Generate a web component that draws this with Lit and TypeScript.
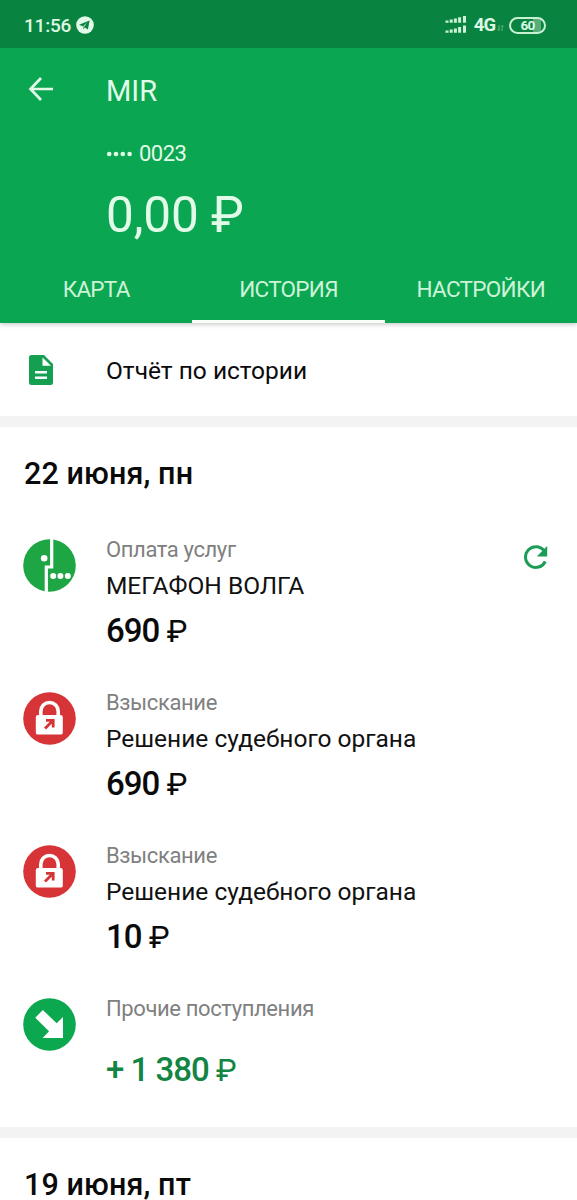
import { LitElement, css, html, svg } from "lit";
import { customElement, property } from "lit/decorators.js";
import { classMap } from "lit/directives/class-map.js";

type Kind = "megafon" | "lock" | "income";

interface Operation {
  kind: Kind;
  label: string;
  title?: string;
  amount: string;
  repeat?: boolean;
}

const operations: Operation[] = [
  {
    kind: "megafon",
    label: "Оплата услуг",
    title: "МЕГАФОН ВОЛГА",
    amount: "690",
    repeat: true,
  },
  {
    kind: "lock",
    label: "Взыскание",
    title: "Решение судебного органа",
    amount: "690",
  },
  {
    kind: "lock",
    label: "Взыскание",
    title: "Решение судебного органа",
    amount: "10",
  },
  { kind: "income", label: "Прочие поступления", amount: "+ 1 380" },
];

const icons = {
  megafon: svg`
    <circle cx="26.5" cy="26.5" r="26.3" fill="#1fa644" />
    <path d="M28.7 0V28H23.3V53" fill="none" stroke="#fff" stroke-width="3.2" />
    <circle cx="21.2" cy="19.3" r="3.3" fill="#fff" />
    <circle cx="30.2" cy="37" r="3" fill="#fff" />
    <circle cx="37.4" cy="37" r="3" fill="#fff" />
    <circle cx="44.8" cy="37" r="3" fill="#fff" />
  `,
  lock: svg`
    <circle cx="26.5" cy="26.5" r="26.3" fill="#d73438" />
    <path
      d="M17.8 25V19.2a8.7 8.7 0 0 1 17.4 0V25"
      fill="none"
      stroke="#fff"
      stroke-width="3.6"
    />
    <rect x="12.8" y="23" width="27" height="19.6" rx="2.2" fill="#fff" />
    <path
      d="M23 28.3h7.2v7.2M30 28.5l-8 8"
      fill="none"
      stroke="#d73438"
      stroke-width="2.8"
    />
  `,
  income: svg`
    <circle cx="26.5" cy="26.5" r="26.3" fill="#0ca850" />
    <path d="M19.8 12L33.7 25.2L40 19V40H19.7L26 33.2L12.3 19.7Z" fill="#fff" />
  `,
};

@customElement("status-bar")
export class StatusBar extends LitElement {
  static styles = css`
    :host {
      display: flex;
      align-items: center;
      justify-content: space-between;
      height: 48px;
      padding: 0 31px 0 24px;
      box-sizing: border-box;
      background: #088440;
      color: #ddf8e4;
      font-weight: 500;
    }

    .side {
      display: flex;
      align-items: center;
      height: 26px;
      padding-top: 2px;
    }

    .time {
      font-size: 19px;
      letter-spacing: -0.2px;
      margin-right: 5px;
    }

    .network {
      font-size: 18.5px;
      font-weight: 700;
      letter-spacing: -1px;
      margin: 0 2px 0 7px;
    }

    .arrows {
      margin: 6px 5px 0 0;
    }

    .battery {
      display: flex;
      align-items: center;
      justify-content: center;
      width: 37px;
      height: 17px;
      box-sizing: border-box;
      border: 2px solid #c8f0d2;
      border-radius: 9px;
      background: linear-gradient(90deg, #088440 68%, #58ad78 68% 90%, #088440 90%);
      font-size: 13.5px;
      font-weight: 700;
      letter-spacing: -0.7px;
    }
  `;

  protected override render() {
    return html`
      <div class="side">
        <span class="time">11:56</span>
        <svg width="18" height="18" viewBox="0 0 18 18">
          <circle cx="9" cy="9" r="8.8" fill="#e4fae9" />
          <path d="M3 8.8L13.6 4.4L11.9 13.6L8.8 11.5L7.2 13L6.8 10.2Z" fill="#088440" />
          <path d="M7.2 12.4V10L11.5 6.2L8.3 10.8" fill="#a8d8b8" />
        </svg>
      </div>
      <div class="side">
        <svg width="22" height="18" viewBox="0 0 22 18">
          <path
            d="M2 6.8V4.6M6.2 6.8V3.4M10.4 6.8V2.4M14.6 6.8V1.2M19.5 6.8V0M2 16.8V14.4M6.2 16.8V13.4M10.4 16.8V12.4M14.6 16.8V11M19.5 16.8V9.6"
            stroke="#ccf1d6"
            stroke-width="3"
          />
        </svg>
        <span class="network">4G</span>
        <svg class="arrows" width="7" height="8" viewBox="0 0 7 8">
          <path
            d="M2 1V6.6L0.5 5M5 7V1.4L6.5 3"
            fill="none"
            stroke="#62b580"
            stroke-width="1"
          />
        </svg>
        <span class="battery">60</span>
      </div>
    `;
  }
}

@customElement("operation-row")
export class OperationRow extends LitElement {
  static styles = css`
    :host {
      display: flex;
      align-items: flex-start;
      height: 153px;
      padding: 8px 28px 0 23.4px;
      box-sizing: border-box;
    }

    .icon {
      flex: none;
      width: 53px;
      height: 53px;
      margin: 5.4px 29.6px 0 0;
    }

    .body {
      flex: 1;
      white-space: nowrap;
    }

    .label {
      line-height: 32px;
      font-size: 22px;
      letter-spacing: -0.38px;
      color: #808080;
    }

    .title {
      line-height: 40px;
      font-size: 24.5px;
      color: #111;
    }

    .amount {
      line-height: 50px;
      font-size: 33px;
      letter-spacing: -1px;
      font-weight: 500;
      color: #0a0a0a;
    }

    .currency {
      font-size: 31px;
      font-weight: 400;
      letter-spacing: -0.3px;
    }

    .income {
      margin-top: 20px;
      color: #128443;
    }

    .repeat {
      margin: 11px 0 0;
    }
  `;

  @property({ attribute: false }) operation!: Operation;

  protected override render() {
    const { kind, label, title, amount, repeat } = this.operation;
    return html`
      <svg class="icon" viewBox="0 0 53 53">${icons[kind]}</svg>
      <div class="body">
        <div class="label">${label}</div>
        ${title ? html`<div class="title">${title}</div>` : ""}
        <div class=${classMap({ amount: true, income: kind === "income" })}>
          ${amount}<span class="currency"> ₽</span>
        </div>
      </div>
      ${repeat
        ? html`
            <svg class="repeat" width="27" height="26" viewBox="0 0 27 26">
              <path
                d="M22 5.5A10.4 10.4 0 1 0 23.3 16.5"
                fill="none"
                stroke="#1b9d57"
                stroke-width="3"
              />
              <path d="M25.2 1V11.5H14.8Z" fill="#1b9d57" />
            </svg>
          `
        : ""}
    `;
  }
}

@customElement("app-root")
export class AppRoot extends LitElement {
  static styles = css`
    :host {
      display: block;
      height: 1200px;
      overflow: hidden;
      background: #fff;
      color: #0a0a0a;
      font-family: Roboto, "Liberation Sans", sans-serif;
    }

    .header {
      position: relative;
      background: #0ba651;
      color: #e2fbe8;
      box-shadow: 0 1px 5px rgba(0, 0, 0, 0.25);
    }

    .card {
      display: grid;
      grid-template-columns: 82px 1fr;
      height: 207px;
      padding: 23px 24px 0;
      box-sizing: border-box;
    }

    .back {
      margin: 4px 0 0 3px;
    }

    .name {
      line-height: 40px;
      font-size: 29px;
    }

    .number {
      display: flex;
      align-items: center;
      gap: 6px;
      margin-top: 23px;
      line-height: 40px;
      font-size: 22px;
      letter-spacing: -0.5px;
    }

    .balance {
      margin-top: 11px;
      line-height: 60px;
      font-size: 49.5px;
      letter-spacing: -0.1px;
    }

    .tabs {
      display: grid;
      grid-template-columns: repeat(3, 1fr);
      height: 68px;
    }

    .tab {
      display: flex;
      align-items: center;
      justify-content: center;
      padding-top: 2px;
      border-bottom: 3px solid transparent;
      font-size: 22.5px;
      letter-spacing: -0.7px;
      color: #cdf3d8;
    }

    .active {
      border-color: #f6fff8;
    }

    .report {
      display: flex;
      align-items: center;
      height: 93px;
      padding: 0 29px;
      box-sizing: border-box;
      font-size: 24.5px;
    }

    .report svg {
      margin-right: 53px;
    }

    .report span {
      padding-top: 2px;
    }

    .divider {
      height: 11px;
      background: #f3f3f3;
    }

    .date {
      height: 99px;
      padding: 29px 24px 0;
      box-sizing: border-box;
      line-height: 35px;
      font-size: 30.5px;
      letter-spacing: 0.1px;
      font-weight: 500;
    }

    operation-row:last-of-type {
      height: 142px;
    }
  `;

  protected override render() {
    return html`
      <div class="header">
        <status-bar></status-bar>
        <div class="card">
          <svg class="back" width="28" height="28" viewBox="0 0 28 28">
            <path
              d="M14 3L3.5 14L14 25M3.5 14H26"
              fill="none"
              stroke="#e2fbe8"
              stroke-width="2.7"
            />
          </svg>
          <div>
            <div class="name">MIR</div>
            <div class="number">
              <svg width="27" height="6" viewBox="0 0 27 6">
                <g fill="#e2fbe8">
                  <circle cx="3.2" cy="3" r="2.3" />
                  <circle cx="10" cy="3" r="2.3" />
                  <circle cx="16.8" cy="3" r="2.3" />
                  <circle cx="23.6" cy="3" r="2.3" />
                </g>
              </svg>
              0023
            </div>
            <div class="balance">0,00 ₽</div>
          </div>
        </div>
        <div class="tabs">
          <div class="tab">КАРТА</div>
          <div class="tab active">ИСТОРИЯ</div>
          <div class="tab">НАСТРОЙКИ</div>
        </div>
      </div>
      <div class="report">
        <svg width="24" height="30" viewBox="0 0 24 30">
          <path
            d="M2.5 0H15L24 9V27.5a2.5 2.5 0 0 1-2.5 2.5H2.5A2.5 2.5 0 0 1 0 27.5V2.5A2.5 2.5 0 0 1 2.5 0Z"
            fill="#149f51"
          />
          <path d="M13.5 2.5V10.8H22Z" fill="#fff" />
          <path d="M6 17.3H18M6 22.8H18" stroke="#fff" stroke-width="2.5" />
        </svg>
        <span>Отчёт по истории</span>
      </div>
      <div class="divider"></div>
      <div class="date">22 июня, пн</div>
      ${operations.map(
        (operation) => html`<operation-row .operation=${operation}></operation-row>`
      )}
      <div class="divider"></div>
      <div class="date">19 июня, пт</div>
    `;
  }
}
